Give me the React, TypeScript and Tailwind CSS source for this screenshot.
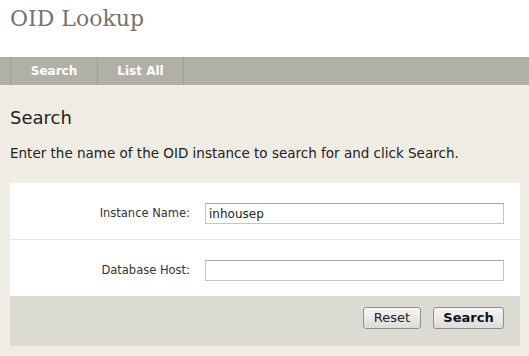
import React from "react";

export default function App() {
  const sans = { fontFamily: '"DejaVu Sans", Verdana, sans-serif' };
  return (
    <div className="w-[529px] h-[356px] overflow-hidden bg-[#efece4]" style={sans}>
      <div className="h-[57px] bg-white pl-[10px] pt-[4px]">
        <h1
          className="text-[22px] leading-[30px] text-[#77736a]"
          style={{ fontFamily: '"DejaVu Serif", Georgia, serif' }}
        >
          OID Lookup
        </h1>
      </div>
      <div className="h-[28px] bg-[#b1b0a6] flex pl-[10px]">
        <div className="flex border-l border-[#a09f96]">
          <a className="w-[87px] border-r border-[#a09f96] flex items-center justify-center text-[12px] font-bold text-white">
            Search
          </a>
          <a className="w-[86px] border-r border-[#a09f96] flex items-center justify-center text-[12px] font-bold text-white">
            List All
          </a>
        </div>
      </div>
      <div className="px-[10px]">
        <h2 className="text-[18px] leading-[22px] text-[#222] pt-[22px]">Search</h2>
        <p className="text-[13.5px] leading-[16px] text-[#222] mt-[16px]">
          Enter the name of the OID instance to search for and click Search.
        </p>
        <div className="mt-[22px] w-[510px] bg-white">
          <div className="h-[57px] pt-[20px] flex items-start border-b border-[#e6e6e6]">
            <label className="w-[180px] h-[21px] flex items-center justify-end text-[11.5px] text-[#333]">
              Instance Name:
            </label>
            <input
              className="ml-[15px] w-[299px] h-[21px] border border-[#c4c4c4] border-t-[#a5a5a5] px-[3px] text-[12px] text-[#222] outline-none"
              defaultValue="inhousep"
            />
          </div>
          <div className="h-[56px] pt-[20px] flex items-start">
            <label className="w-[180px] h-[21px] flex items-center justify-end text-[11.5px] text-[#333]">
              Database Host:
            </label>
            <input
              className="ml-[15px] w-[299px] h-[21px] border border-[#c4c4c4] border-t-[#a5a5a5] px-[3px] text-[12px] text-[#222] outline-none"
              defaultValue=""
            />
          </div>
          <div className="h-[50px] bg-[#dcdbd3] flex justify-end items-start pt-[11px] pr-[16px] gap-[12px]">
            <button className="w-[58px] h-[22px] rounded-[3px] border border-[#8e8e8e] bg-gradient-to-b from-[#f6f6f6] to-[#dcdcdc] text-[13px] text-[#222]">
              Reset
            </button>
            <button className="w-[71px] h-[22px] rounded-[3px] border border-[#8e8e8e] bg-gradient-to-b from-[#f6f6f6] to-[#dcdcdc] text-[13px] font-bold text-[#111]">
              Search
            </button>
          </div>
        </div>
      </div>
    </div>
  );
}
